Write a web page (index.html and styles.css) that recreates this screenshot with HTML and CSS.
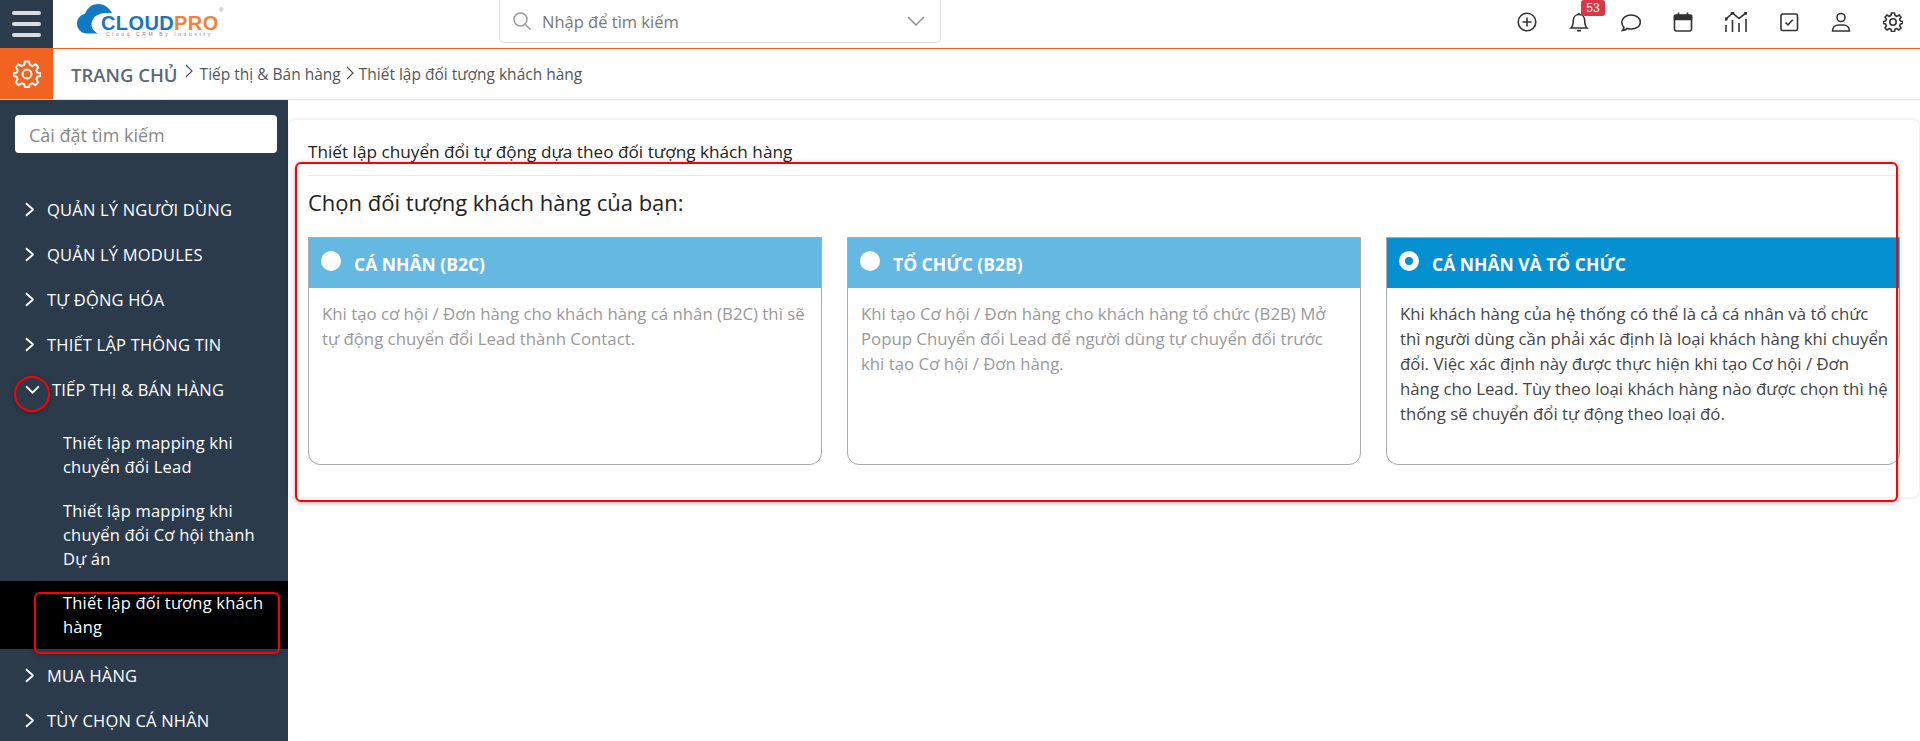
FILE: index.html
```html
<!DOCTYPE html>
<html lang="vi">

<head>
    <meta charset="utf-8">
    <meta name="viewport" content="width=device-width, initial-scale=1.0">
    <title>CloudPro</title>
    <link rel="stylesheet" href="styles.css">
</head>

<body>
    <header class="topbar">
        <button class="burger" aria-label="Menu"><span></span><span></span><span></span></button>
        <a class="logo" href="#">
            <svg class="logo-cloud" viewBox="0 0 40 30" width="40" height="30">
                <path d="M10 29.500C4 29.500 0 25 0 19.500C0 14 4 10.500 8 10C10 4 15 0 21 0C27 0 31.500 3 35 9L29 9C20 9 14.500 14 14.500 20.500C14.500 24.500 17 27.500 21 29.500Z" fill="#1079c6"/>
            </svg>
            <span class="logo-word"><span class="logo-cloudtext">CLOUD</span><span class="logo-pro">PRO</span></span>
            <span class="logo-reg">®</span>
            <span class="logo-tag">Cloud CRM By Industry</span>
        </a>
        <div class="top-search">
            <svg class="ico-search" viewBox="0 0 20 20" width="20" height="20" fill="none" stroke="#9a9a9a" stroke-width="1.500"><circle cx="8.500" cy="8.500" r="6.500"/><path d="M13.500 13.500L18.500 18.500"/></svg>
            <span class="top-search-text">Nhập để tìm kiếm</span>
            <svg class="ico-caret" viewBox="0 0 18 10" width="18" height="10" fill="none" stroke="#8a8a8a" stroke-width="1.400"><path d="M1 1L9 9L17 1"/></svg>
        </div>
        <nav class="top-icons">
            <svg class="ico" viewBox="0 0 20 20"><circle cx="10" cy="10" r="8.800"/><path d="M10 5.500V14.500M5.500 10H14.500"/></svg>
            <span class="bell">
                <svg class="ico" viewBox="0 0 20 20"><path d="M2 16C3.500 14.500 4.300 13 4.300 8.500C4.300 5 6.700 2.500 10 2.500C13.300 2.500 15.700 5 15.700 8.500C15.700 13 16.500 14.500 18 16Z"/><path d="M8 18.600H12M10 1V2.500"/></svg>
                <span class="badge">53</span>
            </span>
            <svg class="ico" viewBox="0 0 20 20"><path d="M1.500 18.500C2.500 17.500 3 16.500 2.800 15C1.500 13.800 0.800 12 0.800 10.300C0.800 6 5 3 10.200 3C15.400 3 19.300 6 19.300 10.300C19.300 14.300 15.400 17 10.200 17C8.800 17 7.400 16.800 6.200 16.400C5 17.700 3.300 18.400 1.500 18.500Z"/></svg>
            <svg class="ico" viewBox="0 0 20 20"><rect x="1.500" y="3" width="17" height="16" rx="2"/><path d="M1.500 3.500H18.500V7.500H1.500Z" fill="#333"/><path d="M5.500 0.500V3M14.500 0.500V3"/></svg>
            <svg class="ico ico-wide" viewBox="0 0 22 20"><path d="M1 7L7.500 1L14 6.500L21 1"/><path d="M1 13V20M7.500 8V20M14 11V20M21 7V20"/><circle cx="1" cy="7" r="1" fill="#333"/><circle cx="7.500" cy="1" r="1" fill="#333"/><circle cx="21" cy="1" r="1" fill="#333"/></svg>
            <svg class="ico" viewBox="0 0 20 20"><rect x="2" y="2" width="16.500" height="16.500" rx="1.500"/><path d="M6.500 10.500L9 12.800L13.800 7.800"/></svg>
            <svg class="ico" viewBox="0 0 20 20"><circle cx="10" cy="5.500" r="4"/><path d="M1.500 19C1.500 15.500 4 13 8 13H12C16 13 18.500 15.500 18.500 19Z"/></svg>
            <svg class="ico" viewBox="0 0 20 20"><circle cx="10" cy="10" r="3.200"/><path d="M8.500 1H11.500L12 3.500L14 4.400L16.200 3L18.100 5.200L16.600 7.300L17.300 9L19.500 9.500V11.500L17.300 12L16.600 13.800L18 16L16 18L13.900 16.600L12 17.300L11.500 19.500H8.500L8 17.300L6.100 16.600L4 18L2 16L3.400 13.800L2.700 12L0.500 11.500V9.500L2.700 9L3.400 7.300L2 5.200L3.900 3L6 4.400L8 3.500Z" stroke-linejoin="round"/></svg>
        </nav>
    </header>

    <div class="crumbbar">
        <div class="crumb-gear">
            <svg viewBox="0 0 20 20" width="28" height="28" fill="none" stroke="#fff" stroke-width="1.400"><circle cx="10" cy="10" r="3.200"/><path d="M8.500 1H11.500L12 3.500L14 4.400L16.200 3L18.100 5.200L16.600 7.300L17.300 9L19.500 9.500V11.500L17.300 12L16.600 13.800L18 16L16 18L13.900 16.600L12 17.300L11.500 19.500H8.500L8 17.300L6.100 16.600L4 18L2 16L3.400 13.800L2.700 12L0.500 11.500V9.500L2.700 9L3.400 7.300L2 5.200L3.900 3L6 4.400L8 3.500Z" stroke-linejoin="round"/></svg>
        </div>
        <span class="crumb-home">TRANG CHỦ</span>
        <svg class="crumb-sep" viewBox="0 0 8 14" width="8" height="14"><path d="M1 1L7 7L1 13"/></svg>
        <span class="crumb-link">Tiếp thị &amp; Bán hàng</span>
        <svg class="crumb-sep crumb-sep-small" viewBox="0 0 8 14" width="8" height="14"><path d="M1 1L7 7L1 13"/></svg>
        <span class="crumb-link">Thiết lập đối tượng khách hàng</span>
    </div>

    <div class="page">
        <aside class="sidebar">
            <div class="side-search">Cài đặt tìm kiếm</div>
            <ul class="side-menu">
                <li class="side-item"><svg class="chev" viewBox="0 0 10 16"><path d="M1 1L9 8L1 15"/></svg>QUẢN LÝ NGƯỜI DÙNG</li>
                <li class="side-item"><svg class="chev" viewBox="0 0 10 16"><path d="M1 1L9 8L1 15"/></svg>QUẢN LÝ MODULES</li>
                <li class="side-item"><svg class="chev" viewBox="0 0 10 16"><path d="M1 1L9 8L1 15"/></svg>TỰ ĐỘNG HÓA</li>
                <li class="side-item"><svg class="chev" viewBox="0 0 10 16"><path d="M1 1L9 8L1 15"/></svg>THIẾT LẬP THÔNG TIN</li>
                <li class="side-item open"><svg class="chev-down" viewBox="0 0 16 10"><path d="M1 1.500L8 8.500L15 1.500"/></svg>TIẾP THỊ &amp; BÁN HÀNG</li>
                <li class="side-sub">Thiết lập mapping khi chuyển đổi Lead</li>
                <li class="side-sub">Thiết lập mapping khi chuyển đổi Cơ hội thành Dự án</li>
                <li class="side-sub active">Thiết lập đối tượng khách hàng</li>
                <li class="side-item"><svg class="chev" viewBox="0 0 10 16"><path d="M1 1L9 8L1 15"/></svg>MUA HÀNG</li>
                <li class="side-item"><svg class="chev" viewBox="0 0 10 16"><path d="M1 1L9 8L1 15"/></svg>TÙY CHỌN CÁ NHÂN</li>
            </ul>
        </aside>

        <main class="content">
            <section class="panel">
                <h2 class="panel-title">Thiết lập chuyển đổi tự động dựa theo đối tượng khách hàng</h2>
                <h3 class="panel-head">Chọn đối tượng khách hàng của bạn:</h3>
                <div class="cards">
                    <article class="card">
                        <div class="card-head"><span class="radio"></span>CÁ NHÂN (B2C)</div>
                        <p class="card-text">Khi tạo cơ hội / Đơn hàng cho khách hàng cá nhân (B2C) thì sẽ<br>tự động chuyển đổi Lead thành Contact.</p>
                    </article>
                    <article class="card">
                        <div class="card-head"><span class="radio"></span>TỔ CHỨC (B2B)</div>
                        <p class="card-text">Khi tạo Cơ hội / Đơn hàng cho khách hàng tổ chức (B2B) Mở<br>Popup Chuyển đổi Lead để người dùng tự chuyển đổi trước<br>khi tạo Cơ hội / Đơn hàng.</p>
                    </article>
                    <article class="card selected">
                        <div class="card-head"><span class="radio"></span>CÁ NHÂN VÀ TỔ CHỨC</div>
                        <p class="card-text">Khi khách hàng của hệ thống có thể là cả cá nhân và tổ chức<br>thì người dùng cần phải xác định là loại khách hàng khi chuyển<br>đổi. Việc xác định này được thực hiện khi tạo Cơ hội / Đơn<br>hàng cho Lead. Tùy theo loại khách hàng nào được chọn thì hệ<br>thống sẽ chuyển đổi tự động theo loại đó.</p>
                    </article>
                </div>
            </section>
        </main>
    </div>

    <!-- khung do chu thich tren anh -->
    <div class="mark mark-panel"></div>
    <div class="mark mark-side"></div>
    <div class="mark mark-circle"></div>
</body>

</html>
```

FILE: styles.css
```css
* {
    box-sizing: border-box;
}

html,
body {
    height: 741px;
    overflow: hidden;
}

body {
    margin: 0;
    position: relative;
    background-color: #fff;
    font-family: "Open Sans", "Noto Sans", sans-serif;
    color: #333;
}

/* top bar */
.topbar {
    display: flex;
    align-items: center;
    height: 49px;
    border-bottom: 1px solid #f26322;
}

.burger {
    display: flex;
    flex-direction: column;
    justify-content: center;
    gap: 7px;
    width: 53px;
    height: 48px;
    padding: 0 12px;
    border: none;
    background-color: #2c3b4b;
}

.burger span {
    height: 4px;
    border-radius: 2px;
    background-color: #d9dcdf;
}

.logo {
    position: relative;
    display: block;
    width: 146px;
    height: 30px;
    margin: -10px 0 0 24px;
    text-decoration: none;
}

.logo-cloud {
    display: block;
}

.logo-word {
    position: absolute;
    left: 24px;
    top: 11px;
    font-family: "Liberation Sans", sans-serif;
    font-size: 20px;
    line-height: 16px;
    font-weight: 700;
    letter-spacing: .4px;
    white-space: nowrap;
}

.logo-cloudtext {
    color: #1b75bb;
}

.logo-pro {
    color: #f0823c;
}

.logo-reg {
    position: absolute;
    left: 142px;
    top: 2px;
    font-family: "Liberation Sans", sans-serif;
    font-size: 6px;
    line-height: 8px;
    color: #888;
}

.logo-tag {
    position: absolute;
    left: 29px;
    top: 27px;
    font-family: "Liberation Sans", sans-serif;
    font-size: 5px;
    line-height: 6px;
    letter-spacing: 2.600px;
    color: #888;
    white-space: nowrap;
}

.top-search {
    display: flex;
    align-items: center;
    width: 442px;
    height: 43px;
    margin: -5px 0 0 276px;
    padding: 0 15px 0 12px;
    border: 1px solid #dedede;
    border-top: none;
    border-radius: 0 0 5px 5px;
}

.top-search-text {
    margin-left: 10px;
    flex: 1;
    font-size: 16.500px;
    color: #777;
}

.top-icons {
    display: flex;
    align-items: center;
    gap: 32px;
    margin: -4px 0 0 auto;
    padding-right: 17px;
}

.ico {
    display: block;
    width: 20px;
    height: 20px;
    fill: none;
    stroke: #333;
    stroke-width: 1.600;
}

.ico-wide {
    width: 22px;
}

.bell {
    position: relative;
    display: block;
}

.badge {
    position: absolute;
    left: 12px;
    top: -12px;
    width: 24px;
    height: 16px;
    border-radius: 3px;
    background-color: #dc3545;
    color: #fff;
    font-family: "Liberation Sans", sans-serif;
    font-size: 12px;
    line-height: 16px;
    text-align: center;
}

/* breadcrumb */
.crumbbar {
    display: flex;
    align-items: center;
    height: 51px;
    border-bottom: 1px solid #e2e2e2;
}

.crumb-gear {
    display: flex;
    align-items: center;
    justify-content: center;
    width: 53px;
    height: 50px;
    background-color: #f26322;
}

.crumb-home {
    margin-left: 18px;
    font-size: 18.500px;
    font-weight: 600;
    color: #5d6871;
}

.crumb-sep {
    margin: -6px 7px 0 7px;
    fill: none;
    stroke: #555;
    stroke-width: 1.200;
}

.crumb-sep-small {
    margin: -2px 5px 0 5px;
}

.crumb-link {
    font-size: 15.500px;
    color: #555;
}

/* sidebar */
.page {
    display: flex;
    height: 641px;
}

.sidebar {
    flex: 0 0 288px;
    padding-top: 15px;
    background-color: #2c3b4b;
    color: #fff;
}

.side-search {
    height: 38px;
    margin: 0 11px 0 15px;
    padding-left: 14px;
    border-radius: 4px;
    background-color: #fff;
    color: #888;
    font-size: 18px;
    line-height: 40px;
}

.side-menu {
    margin: 34px 0 0;
    padding: 0;
    list-style: none;
}

.side-item {
    display: flex;
    align-items: center;
    height: 45px;
    padding-left: 25px;
    font-size: 16.500px;
    letter-spacing: .2px;
    white-space: nowrap;
}

.chev {
    flex: none;
    width: 9px;
    height: 15px;
    margin-right: 13px;
    fill: none;
    stroke: #fff;
    stroke-width: 2;
}

.chev-down {
    flex: none;
    width: 15px;
    height: 9px;
    margin-right: 12px;
    fill: none;
    stroke: #fff;
    stroke-width: 2;
}

.side-sub {
    padding: 10px 20px 10px 63px;
    font-size: 16.500px;
    letter-spacing: .2px;
    line-height: 24px;
}

.side-sub.active {
    margin-bottom: 4px;
    background-color: #000;
}

.side-item.open {
    margin-bottom: 9px;
}

/* content */
.content {
    flex: 1;
    min-width: 0;
    padding: 20px 1px 0;
}

.panel {
    height: 377px;
    padding: 0 19px;
    border-radius: 6px;
    background-color: #fff;
    box-shadow: 0 0 4px rgba(0, 0, 0, .14);
}

.panel-title {
    height: 56px;
    margin: 0;
    padding-top: 20px;
    border-bottom: 1px solid #e9e9e9;
    color: #222;
    font-size: 17.200px;
    line-height: 24px;
    font-weight: 500;
}

.panel-head {
    margin: 11px 0 20px;
    color: #222;
    font-size: 22px;
    line-height: 30px;
    font-weight: 500;
}

.cards {
    display: grid;
    grid-template-columns: repeat(3, 514px);
    gap: 25px;
}

.card {
    height: 228px;
    border: 1px solid #aaa;
    border-radius: 0 0 12px 12px;
}

.card-head {
    display: flex;
    height: 50px;
    padding: 13px 0 0 12px;
    background-color: #65b8e2;
    color: #fff;
    font-size: 17.500px;
    font-weight: 700;
    line-height: 26px;
}

.radio {
    flex: none;
    width: 20px;
    height: 20px;
    margin-right: 13px;
    border-radius: 50%;
    background-color: #fff;
}

.card-text {
    margin: 13px 0 0 13px;
    font-size: 16.800px;
    line-height: 25px;
    color: #999;
    white-space: nowrap;
}

.card.selected .card-head {
    background-color: #0490d1;
}

.card.selected .radio {
    border: 6px solid #fff;
    background-color: #0490d1;
}

.card.selected .card-text {
    color: #444;
}

/* annotations */
.mark {
    position: absolute;
    border: 2px solid #f00;
    box-shadow: 0 1px 5px rgba(0, 0, 0, .3);
}

.mark-panel {
    left: 295px;
    top: 162px;
    width: 1603px;
    height: 340px;
    border-radius: 6px;
}

.mark-side {
    left: 34px;
    top: 592px;
    width: 246px;
    height: 62px;
    border-radius: 6px;
}

.mark-circle {
    left: 14px;
    top: 376px;
    width: 36px;
    height: 36px;
    border-radius: 50%;
}
```
